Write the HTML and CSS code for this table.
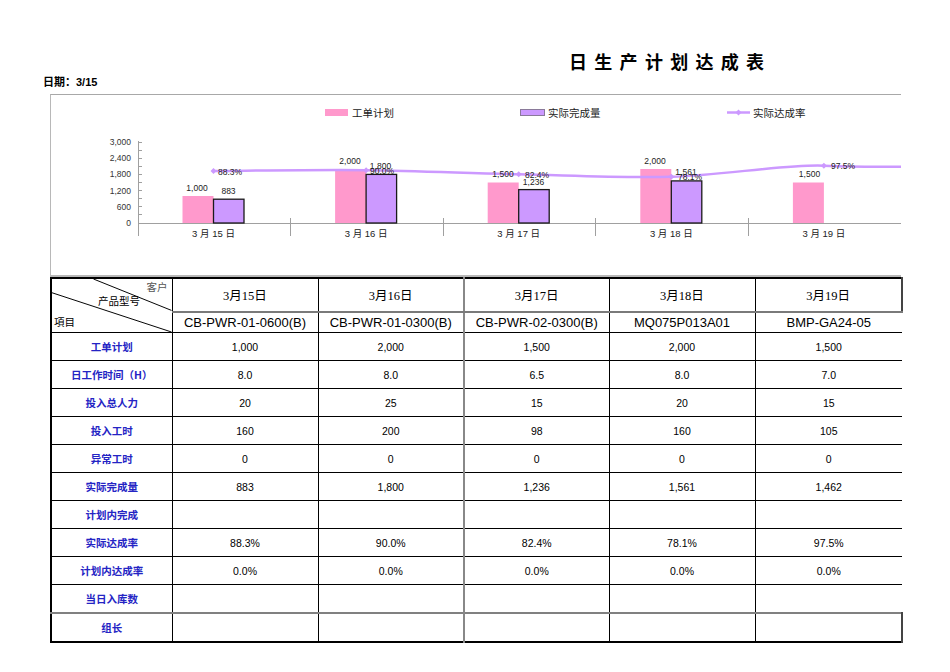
FILE: index.html
```html
<!DOCTYPE html>
<html lang="zh-CN">
<head>
<meta charset="utf-8">
<title>日生产计划达成表</title>
<link rel="stylesheet" href="styles.css">
</head>
<body>
<div class="sheet">
  <h1 class="title">日生产计划达成表</h1>
  <div class="date">日期：3/15</div>
  <div class="chart">
    <svg width="850" height="180" viewBox="51 95 850 180" xmlns="http://www.w3.org/2000/svg">
      <!-- legend -->
      <rect x="325" y="109" width="23" height="7" fill="#ff99cc"/>
      <text class="lg" x="352" y="116.5">工单计划</text>
      <rect x="520.5" y="109.5" width="24" height="6" fill="#cc99ff" stroke="#8a7a9a" stroke-width="1"/>
      <text class="lg" x="548" y="116.5">实际完成量</text>
      <line x1="727" y1="112.5" x2="750" y2="112.5" stroke="#cc99ff" stroke-width="2.5"/>
      <path d="M738.5 109.5 L741.5 112.5 L738.5 115.5 L735.5 112.5 Z" fill="#cc99ff"/>
      <text class="lg" x="753" y="116.5">实际达成率</text>

      <!-- y axis -->
      <g class="yl">
        <text x="131" y="145">3,000</text>
        <text x="131" y="161.2">2,400</text>
        <text x="131" y="177.4">1,800</text>
        <text x="131" y="193.6">1,200</text>
        <text x="131" y="209.8">600</text>
        <text x="131" y="226">0</text>
      </g>
      <g stroke="#a0a0a0" stroke-width="1">
        <line x1="138.5" y1="141" x2="138.5" y2="236"/>
        <line x1="138" y1="142.5" x2="142" y2="142.5"/>
        <line x1="138" y1="150.5" x2="142" y2="150.5"/>
        <line x1="138" y1="158.5" x2="142" y2="158.5"/>
        <line x1="138" y1="166.5" x2="142" y2="166.5"/>
        <line x1="138" y1="174.5" x2="142" y2="174.5"/>
        <line x1="138" y1="182.5" x2="142" y2="182.5"/>
        <line x1="138" y1="190.5" x2="142" y2="190.5"/>
        <line x1="138" y1="198.5" x2="142" y2="198.5"/>
        <line x1="138" y1="206.5" x2="142" y2="206.5"/>
        <line x1="138" y1="214.5" x2="142" y2="214.5"/>
        <line x1="138" y1="223.5" x2="901" y2="223.5"/>
        <line x1="290.5" y1="218" x2="290.5" y2="236"/>
        <line x1="443.5" y1="218" x2="443.5" y2="236"/>
        <line x1="595.5" y1="218" x2="595.5" y2="236"/>
        <line x1="748.5" y1="218" x2="748.5" y2="236"/>
      </g>

      <!-- bars -->
      <rect x="182.5" y="196" width="31" height="27" fill="#ff99cc"/>
      <rect x="213.5" y="199.2" width="30.5" height="23.8" fill="#cc99ff" stroke="#1a1a1a" stroke-width="1.3"/>
      <rect x="335.1" y="169" width="31" height="54" fill="#ff99cc"/>
      <rect x="366.1" y="174.4" width="30.5" height="48.6" fill="#cc99ff" stroke="#1a1a1a" stroke-width="1.3"/>
      <rect x="487.7" y="182.5" width="31" height="40.5" fill="#ff99cc"/>
      <rect x="518.7" y="189.6" width="30.5" height="33.4" fill="#cc99ff" stroke="#1a1a1a" stroke-width="1.3"/>
      <rect x="640.3" y="169" width="31" height="54" fill="#ff99cc"/>
      <rect x="671.3" y="180.9" width="30.5" height="42.1" fill="#cc99ff" stroke="#1a1a1a" stroke-width="1.3"/>
      <rect x="792.9" y="182.5" width="31" height="40.5" fill="#ff99cc"/>

      <!-- rate line -->
      <path d="M213.5 171 C238.9 170.9 315.2 169.65 366.1 170.2 C416.97 170.75 467.8 173.2 518.7 174.3 C569.6 175.4 620.4 178.2 671.3 176.8 C722.2 175.4 785.6 164 823.9 165.7 C862.2 167.4 888.1 166.6 901 166.8" fill="none" stroke="#cc99ff" stroke-width="2.5" stroke-linejoin="round"/>
      <g fill="#cc99ff">
        <path d="M213.5 168 L216.5 171 L213.5 174 L210.5 171 Z"/>
        <path d="M366.1 167.2 L369.1 170.2 L366.1 173.2 L363.1 170.2 Z"/>
        <path d="M518.7 171.3 L521.7 174.3 L518.7 177.3 L515.7 174.3 Z"/>
        <path d="M671.3 173.8 L674.3 176.8 L671.3 179.8 L668.3 176.8 Z"/>
        <path d="M823.9 162.7 L826.9 165.7 L823.9 168.7 L820.9 165.7 Z"/>
      </g>

      <!-- data labels -->
      <g class="dl">
        <text x="197" y="191" text-anchor="middle">1,000</text>
        <text x="228.5" y="194" text-anchor="middle">883</text>
        <text x="218" y="174.5">88.3%</text>
        <text x="350" y="163.5" text-anchor="middle">2,000</text>
        <text x="380.5" y="168.5" text-anchor="middle">1,800</text>
        <text x="370" y="173.5">90.0%</text>
        <text x="503" y="177" text-anchor="middle">1,500</text>
        <text x="525" y="177.5">82.4%</text>
        <text x="533.5" y="184.5" text-anchor="middle">1,236</text>
        <text x="655" y="163.5" text-anchor="middle">2,000</text>
        <text x="686" y="175" text-anchor="middle">1,561</text>
        <text x="678" y="179.5">78.1%</text>
        <text x="809.5" y="177" text-anchor="middle">1,500</text>
        <text x="831" y="168.5">97.5%</text>
      </g>

      <!-- x labels -->
      <g class="xl">
        <text x="213.5" y="236.5">3 月 15 日</text>
        <text x="366.1" y="236.5">3 月 16 日</text>
        <text x="518.7" y="236.5">3 月 17 日</text>
        <text x="671.3" y="236.5">3 月 18 日</text>
        <text x="823.9" y="236.5">3 月 19 日</text>
      </g>
    </svg>
  </div>

  <table class="grid">
    <colgroup>
      <col class="c0"><col class="c1"><col class="c1"><col class="c2"><col class="c1"><col class="c3">
    </colgroup>
    <tr class="hr1">
      <td class="corner" rowspan="2">
        <div class="corner-in">
          <svg class="diag" viewBox="0 0 121 54" preserveAspectRatio="none" xmlns="http://www.w3.org/2000/svg">
            <line x1="42" y1="0" x2="121" y2="32" stroke="#000" stroke-width="1"/>
            <line x1="0" y1="14" x2="121" y2="54" stroke="#000" stroke-width="1"/>
          </svg>
          <span class="c-cust">客户</span>
          <span class="c-model">产品型号</span>
          <span class="c-item">項目</span>
        </div>
      </td>
      <td class="day">3月15日</td>
      <td class="day">3月16日</td>
      <td class="day g">3月17日</td>
      <td class="day">3月18日</td>
      <td class="day end">3月19日</td>
    </tr>
    <tr class="hr2">
      <td class="model">CB-PWR-01-0600(B)</td>
      <td class="model">CB-PWR-01-0300(B)</td>
      <td class="model g">CB-PWR-02-0300(B)</td>
      <td class="model">MQ075P013A01</td>
      <td class="model">BMP-GA24-05</td>
    </tr>
    <tr>
      <td class="lbl">工单计划</td><td>1,000</td><td>2,000</td><td class="g">1,500</td><td>2,000</td><td>1,500</td>
    </tr>
    <tr>
      <td class="lbl">日工作时间（H）</td><td>8.0</td><td>8.0</td><td class="g">6.5</td><td>8.0</td><td>7.0</td>
    </tr>
    <tr>
      <td class="lbl">投入总人力</td><td>20</td><td>25</td><td class="g">15</td><td>20</td><td>15</td>
    </tr>
    <tr>
      <td class="lbl">投入工时</td><td>160</td><td>200</td><td class="g">98</td><td>160</td><td>105</td>
    </tr>
    <tr>
      <td class="lbl">异常工时</td><td>0</td><td>0</td><td class="g">0</td><td>0</td><td>0</td>
    </tr>
    <tr class="gt">
      <td class="lbl">实际完成量</td><td>883</td><td>1,800</td><td class="g">1,236</td><td>1,561</td><td>1,462</td>
    </tr>
    <tr>
      <td class="lbl">计划内完成</td><td></td><td></td><td class="g"></td><td></td><td></td>
    </tr>
    <tr>
      <td class="lbl">实际达成率</td><td>88.3%</td><td>90.0%</td><td class="g">82.4%</td><td>78.1%</td><td>97.5%</td>
    </tr>
    <tr class="gt">
      <td class="lbl">计划内达成率</td><td>0.0%</td><td>0.0%</td><td class="g">0.0%</td><td>0.0%</td><td>0.0%</td>
    </tr>
    <tr class="gt">
      <td class="lbl">当日入库数</td><td></td><td></td><td class="g"></td><td></td><td></td>
    </tr>
    <tr class="gt2 last">
      <td class="lbl">组长</td><td></td><td></td><td class="g"></td><td></td><td class="end"></td>
    </tr>
  </table>
</div>
</body>
</html>
```
FILE: styles.css
```css
html, body {
  margin: 0;
  background: #fff;
}
body {
  font-family: "Liberation Sans", "Noto Sans CJK SC", sans-serif;
  color: #000;
}
.sheet {
  padding: 49px 0 0 43px;
}
.title {
  margin: 0 0 0 526px;
  font: 700 18px/24px "Noto Sans CJK SC", sans-serif;
  letter-spacing: 7.3px;
}
.date {
  margin-top: 2px;
  font: 700 11px/14px "Liberation Sans", "Noto Sans CJK SC", sans-serif;
}
.chart {
  margin: 5px 0 0 7px;
  width: 850px;
  height: 180px;
  border-top: 1px solid #a8a8a8;
  border-left: 1px solid #b8b8b8;
  border-bottom: 2px solid #b8b8b8;
}
.chart svg {
  display: block;
}
.chart text {
  font-family: "Liberation Sans", "Noto Sans CJK SC", sans-serif;
}
.lg {
  font-size: 10.5px;
  fill: #222;
}
.yl text {
  font-size: 8.5px;
  fill: #333;
  text-anchor: end;
}
.dl text {
  font-size: 8.5px;
  fill: #222;
}
.xl text {
  font-size: 9.5px;
  fill: #222;
  text-anchor: middle;
}

.grid {
  margin-left: 7px;
  border-collapse: collapse;
  table-layout: fixed;
  width: 852px;
  border-left: 2px solid #000;
  border-top: 2px solid #000;
  border-bottom: 2px solid #000;
}
.c0 { width: 121px; }
.c1 { width: 146px; }
.c2 { width: 145px; }
.c3 { width: 147px; }
.grid td {
  border: 1px solid #000;
  padding: 0;
  text-align: center;
  vertical-align: middle;
  font-size: 10.5px;
  height: 27px;
}
.grid td:last-child {
  border-right: 0;
}
.grid td.end {
  border-right: 2px solid #444;
}
.grid td.g {
  border-left: 2px solid #888;
}
.grid tr.gt td {
  border-top-color: #777;
}
.grid tr.gt2 td {
  border-top: 2px solid #808080;
}
.grid tr.last td {
  height: 27px;
}
.hr1 td {
  height: 31px;
}
.hr2 td {
  height: 19px;
}
.day {
  font-family: "Liberation Serif", "Noto Sans CJK SC", serif;
  font-size: 12.5px !important;
  border-bottom: 2px solid #7a7a7a !important;
}
.model {
  font-size: 13px !important;
}
.lbl {
  color: #2424c4;
  font-weight: 700;
  font-family: "Noto Sans CJK SC", sans-serif;
}
.corner {
  position: relative;
}
.corner-in {
  position: relative;
  display: flex;
  flex-direction: column;
  height: 53px;
  padding: 1px 4px 3px 2px;
  box-sizing: border-box;
  font-size: 10.5px;
  line-height: 14px;
  text-align: left;
}
.diag {
  position: absolute;
  left: 0;
  top: 0;
  width: 100%;
  height: 100%;
}
.c-cust {
  align-self: flex-end;
  color: #555;
}
.c-model {
  padding-left: 44px;
}
.c-item {
  margin-top: auto;
}
```
